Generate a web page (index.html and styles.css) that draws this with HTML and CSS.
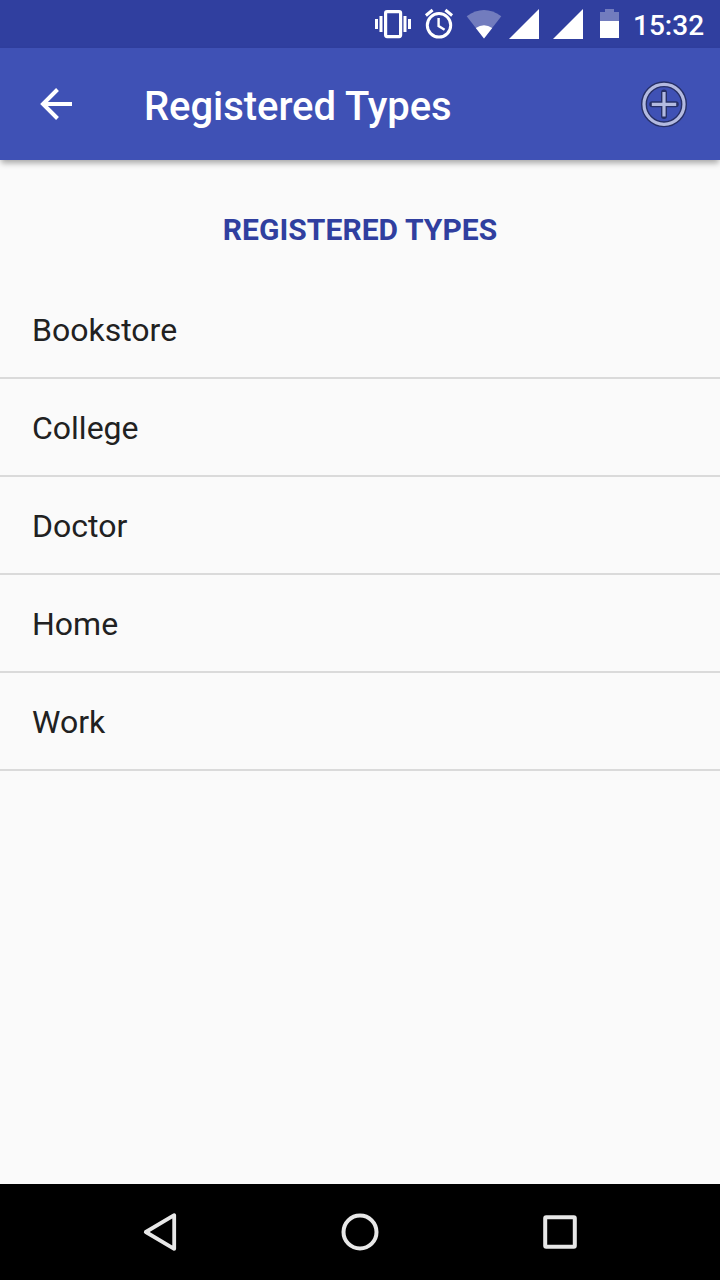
FILE: index.html
```html
<!DOCTYPE html>
<html lang="en">
<head>
<meta charset="utf-8">
<title>Registered Types</title>
<link rel="stylesheet" href="styles.css">
</head>
<body>
<div class="screen">
  <div class="status-bar">
    <svg width="46" height="48" viewBox="370 0 46 48" fill="#fff"><rect x="385.6" y="11.6" width="15" height="25" rx="1.5" fill="none" stroke="#fff" stroke-width="3.2"/><path d="M375 19h3v10h-3zM379.5 16h3v16h-3zM403.5 16h3v16h-3zM408 19h3v10h-3z"/></svg>
    <svg width="46" height="48" viewBox="416 0 46 48" fill="none" stroke="#fff" stroke-width="3"><circle cx="439" cy="25.3" r="11.7"/><path d="M425.9 15.5l6.7-5.5M445.4 10l6.7 5.5"/><path d="M438.6 18v8l6 3.8" stroke-width="2.4"/></svg>
    <svg width="44" height="48" viewBox="462 0 44 48"><path d="M484 38.5L466.7 16.2Q484 3.8 501.3 16.2z" fill="#fff" fill-opacity=".32"/><path d="M484 38.5L475.8 28Q484 22.6 492.2 28z" fill="#fff"/></svg>
    <svg width="44" height="48" viewBox="506 0 44 48"><path d="M509 39L539 9v30z" fill="#fff"/></svg>
    <svg width="44" height="48" viewBox="550 0 44 48"><path d="M553 39L583 9v30z" fill="#fff"/></svg>
    <svg width="39" height="48" viewBox="594 0 39 48" fill="#fff"><path d="M605 9h9v3h5v9h-19v-9h5z" fill-opacity=".32"/><path d="M600 21h19v17h-19z"/></svg>
    <span class="clock">15:32</span>
  </div>
  <header class="app-bar">
    <svg class="back" width="112" height="112" viewBox="0 48 112 112" fill="none" stroke="#fff" stroke-width="4"><path d="M72 104H43M57.5 89.5L43 104l14.5 14.5"/></svg>
    <h1 class="title">Registered Types</h1>
    <svg class="add" width="112" height="112" viewBox="608 48 112 112" fill="none"><g stroke="#273067" stroke-width="6"><circle cx="664" cy="104.3" r="20"/><path d="M664 92.5v23.6M652.2 104.3h23.6" stroke-linecap="round"/></g><g stroke="#b3bae0" stroke-width="3.2"><circle cx="664" cy="104.3" r="20"/><path d="M664 92.1v24.4M651.8 104.3h24.4"/></g></svg>
  </header>
  <main class="content">
    <h2 class="heading">REGISTERED TYPES</h2>
    <ul class="list">
      <li class="item">Bookstore</li>
      <li class="item">College</li>
      <li class="item">Doctor</li>
      <li class="item">Home</li>
      <li class="item">Work</li>
    </ul>
  </main>
  <nav class="nav-bar">
    <svg width="200" height="96" viewBox="60 1184 200 96" fill="none" stroke="#e8e8e8" stroke-width="3.8" stroke-linejoin="round"><path d="M174.2 1215.2v33.6L145.8 1232z"/></svg>
    <svg width="200" height="96" viewBox="260 1184 200 96" fill="none" stroke="#e8e8e8" stroke-width="4"><circle cx="360" cy="1232" r="16.5"/></svg>
    <svg width="200" height="96" viewBox="460 1184 200 96" fill="none" stroke="#e8e8e8" stroke-width="4"><rect x="545.2" y="1217.2" width="29.6" height="29.6" rx="1"/></svg>
  </nav>
</div>
</body>
</html>
```
FILE: styles.css
```css
* { box-sizing: border-box; }
body { margin: 0; font-family: Roboto, "Liberation Sans", sans-serif; }
svg { display: block; flex: none; }
.screen { width: 720px; height: 1280px; display: flex; flex-direction: column; background: #fafafa; }
.status-bar { height: 48px; flex: none; display: flex; padding-left: 370px; background: #303f9f; color: #fff; }
.clock { font-size: 28px; font-weight: 500; line-height: 52px; white-space: nowrap; }
.app-bar { height: 112px; flex: none; display: flex; background: #3f51b5; color: #fff; box-shadow: 0 4px 6px -1px rgba(0, 0, 0, .34); }
.title { flex: 1; margin: 0; padding-left: 32px; font-size: 40px; font-weight: 500; line-height: 118px; letter-spacing: -.06px; white-space: nowrap; }
.content { flex: 1; }
.heading { margin: 0; padding-top: 50px; height: 121px; font-size: 30px; font-weight: 700; line-height: 40px; letter-spacing: .06px; text-align: center; color: #303f9f; }
.list { margin: 0; padding: 0; list-style: none; }
.item { height: 98px; padding-left: 32px; border-bottom: 2px solid #dadada; font-size: 32px; line-height: 98px; color: #212121; }
.nav-bar { height: 96px; flex: none; display: flex; justify-content: center; background: #000; }
```
